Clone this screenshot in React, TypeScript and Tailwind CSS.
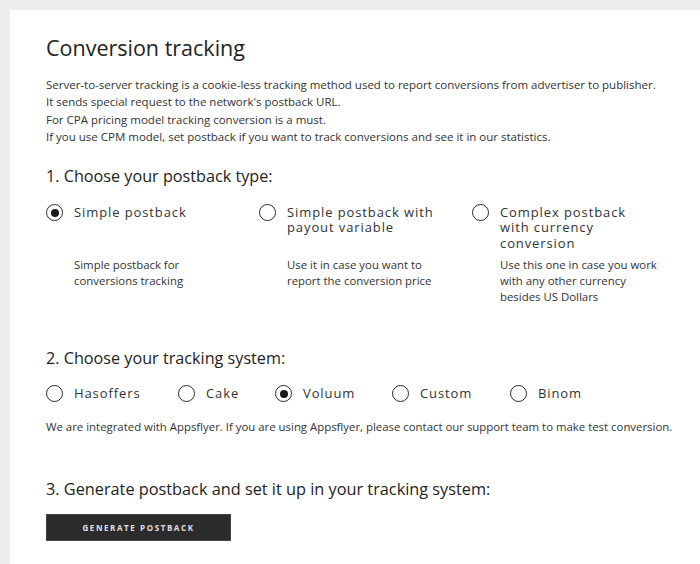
import React from "react";

function Radio({ checked }: { checked?: boolean }) {
  return (
    <span className="flex h-[17px] w-[17px] shrink-0 items-center justify-center rounded-full border-[1.6px] border-[#2a2a2a]">
      {checked && <span className="h-[8px] w-[8px] rounded-full bg-[#1a1a1a]" />}
    </span>
  );
}

const types = [
  { label: "Simple postback", desc: "Simple postback for conversions tracking", checked: true, lw: "w-[160px]" },
  { label: "Simple postback with payout variable", desc: "Use it in case you want to report the conversion price", lw: "w-[160px]" },
  { label: "Complex postback with currency conversion", desc: "Use this one in case you work with any other currency besides US Dollars", lw: "w-[140px]" },
];

const systems = [
  { l: "Hasoffers", w: "w-[132px]" },
  { l: "Cake", w: "w-[97px]" },
  { l: "Voluum", w: "w-[117px]", c: true },
  { l: "Custom", w: "w-[118px]" },
  { l: "Binom", w: "w-[100px]" },
];

export default function App() {
  const font = { fontFamily: '"Open Sans", "Noto Sans", sans-serif' };
  return (
    <div className="min-h-[564px] bg-[#eeeeee] pl-[10px] pt-[10px]" style={font}>
      <div className="min-h-[554px] bg-white pl-[36px] pr-[20px] pt-[22px] text-[#333]">
        <h1 className="text-[21.5px] leading-[32px] text-[#222]">Conversion tracking</h1>
        <div className="mt-[12px] text-[11.5px] leading-[17.3px] text-[#333]">
          <p>Server-to-server tracking is a cookie-less tracking method used to report conversions from advertiser to publisher.</p>
          <p>It sends special request to the network's postback URL.</p>
          <p>For CPA pricing model tracking conversion is a must.</p>
          <p>If you use CPM model, set postback if you want to track conversions and see it in our statistics.</p>
        </div>

        <h2 className="mt-[19px] text-[16.2px] leading-[24px] text-[#222]">1. Choose your postback type:</h2>
        <div className="mt-[16px] grid grid-cols-[213px_213px_200px]">
          {types.map((o) => (
            <div key={o.label} className="flex flex-col">
              <div className="flex h-[47px] items-start gap-[11px]">
                <Radio checked={o.checked} />
                <span className={`${o.lw} mt-[0.5px] text-[13px] font-medium leading-[15.5px] tracking-[0.9px] text-[#333]`}>{o.label}</span>
              </div>
              <p className="ml-[28px] mt-[6px] w-[165px] text-[11.4px] leading-[16px] text-[#333]">{o.desc}</p>
            </div>
          ))}
        </div>

        <h2 className="mt-[41px] text-[16.2px] leading-[24px] text-[#222]">2. Choose your tracking system:</h2>
        <div className="mt-[15px] flex items-center">
          {systems.map((o) => (
            <div key={o.l} className={`flex items-center gap-[11px] ${o.w}`}>
              <Radio checked={o.c} />
              <span className="text-[13px] font-medium leading-[17px] tracking-[0.9px] text-[#333]">{o.l}</span>
            </div>
          ))}
        </div>
        <p className="mt-[17px] text-[11.4px] leading-[16px] text-[#333]">
          We are integrated with Appsflyer. If you are using Appsflyer, please contact our support team to make test conversion.
        </p>

        <h2 className="mt-[42px] text-[16.3px] leading-[24px] text-[#222]">3. Generate postback and set it up in your tracking system:</h2>
        <button className="mt-[13px] flex h-[27px] w-[185px] items-center justify-center border border-[#444] bg-[#2b2b2b] text-[8px] font-bold tracking-[1.6px] text-[#e0e0e0]">
          GENERATE POSTBACK
        </button>
      </div>
    </div>
  );
}
